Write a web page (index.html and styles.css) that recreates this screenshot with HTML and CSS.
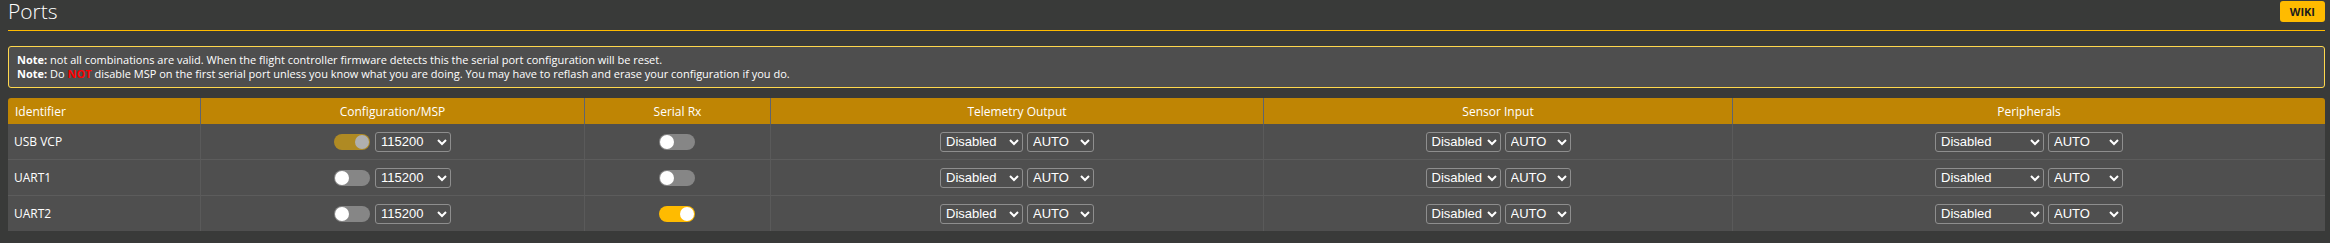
FILE: index.html
```html
<!DOCTYPE html>
<html lang="en">
<head>
    <meta charset="UTF-8">
    <meta name="viewport" content="width=device-width, initial-scale=1.0">
    <title>Ports</title>
    <link rel="stylesheet" href="styles.css">
</head>
<body>
    <div class="tab-ports">
        <div class="tab-header">
            <h1>Ports</h1>
            <a class="wiki-btn" href="#">WIKI</a>
        </div>

        <!-- Warnings -->
        <div class="note">
            <p><strong>Note:</strong> not all combinations are valid. When the flight controller firmware detects this the serial port configuration will be reset.</p>
            <p><strong>Note:</strong> Do <span class="red">NOT</span> disable MSP on the first serial port unless you know what you are doing. You may have to reflash and erase your configuration if you do.</p>
        </div>

        <table class="ports">
            <thead>
                <tr>
                    <th class="col-id">Identifier</th>
                    <th class="col-msp">Configuration/MSP</th>
                    <th class="col-rx">Serial Rx</th>
                    <th class="col-telem">Telemetry Output</th>
                    <th class="col-sensor">Sensor Input</th>
                    <th class="col-periph">Peripherals</th>
                </tr>
            </thead>
            <tbody>
                <tr>
                    <td class="ident">USB VCP</td>
                    <td><div class="cell"><span class="switch on disabled"><span class="knob"></span></span><select class="sel-baud"><option>115200</option></select></div></td>
                    <td><div class="cell"><span class="switch"><span class="knob"></span></span></div></td>
                    <td><div class="cell"><select class="sel-telem"><option>Disabled</option></select><select class="sel-auto-t"><option>AUTO</option></select></div></td>
                    <td><div class="cell"><select class="sel-sensor"><option>Disabled</option></select><select class="sel-auto-s"><option>AUTO</option></select></div></td>
                    <td><div class="cell"><select class="sel-periph"><option>Disabled</option></select><select class="sel-auto-p"><option>AUTO</option></select></div></td>
                </tr>
                <tr>
                    <td class="ident">UART1</td>
                    <td><div class="cell"><span class="switch"><span class="knob"></span></span><select class="sel-baud"><option>115200</option></select></div></td>
                    <td><div class="cell"><span class="switch"><span class="knob"></span></span></div></td>
                    <td><div class="cell"><select class="sel-telem"><option>Disabled</option></select><select class="sel-auto-t"><option>AUTO</option></select></div></td>
                    <td><div class="cell"><select class="sel-sensor"><option>Disabled</option></select><select class="sel-auto-s"><option>AUTO</option></select></div></td>
                    <td><div class="cell"><select class="sel-periph"><option>Disabled</option></select><select class="sel-auto-p"><option>AUTO</option></select></div></td>
                </tr>
                <tr>
                    <td class="ident">UART2</td>
                    <td><div class="cell"><span class="switch"><span class="knob"></span></span><select class="sel-baud"><option>115200</option></select></div></td>
                    <td><div class="cell"><span class="switch on"><span class="knob"></span></span></div></td>
                    <td><div class="cell"><select class="sel-telem"><option>Disabled</option></select><select class="sel-auto-t"><option>AUTO</option></select></div></td>
                    <td><div class="cell"><select class="sel-sensor"><option>Disabled</option></select><select class="sel-auto-s"><option>AUTO</option></select></div></td>
                    <td><div class="cell"><select class="sel-periph"><option>Disabled</option></select><select class="sel-auto-p"><option>AUTO</option></select></div></td>
                </tr>
            </tbody>
        </table>
    </div>
</body>
</html>
```

FILE: styles.css
```css
body {
    margin: 0;
    background: #393a39;
    color: #fff;
    font-family: "Open Sans", "Noto Sans", sans-serif;
}
.tab-ports {
    padding: 0 5px 0 8px;
}
.tab-header {
    display: flex;
    justify-content: space-between;
    align-items: flex-start;
    height: 30px;
    border-bottom: 1px solid #ffbb00;
}
.tab-header h1 {
    margin: 0;
    font-size: 21px;
    font-weight: 300;
    line-height: 22px;
}
.wiki-btn {
    margin-top: 1px;
    padding: 0 10px;
    height: 21px;
    line-height: 21px;
    background: #ffbb00;
    border-radius: 3px;
    color: #1d1d1d;
    font-size: 11px;
    font-weight: 700;
    text-decoration: none;
}
.note {
    margin-top: 15px;
    padding: 6px 8px;
    background: #4e4e4e;
    border: 1px solid #ffd84d;
    border-radius: 3px;
    font-size: 11px;
    line-height: 14px;
}
.note p {
    margin: 0;
}
.note .red {
    color: #ff0000;
    font-weight: 700;
}
.ports {
    margin-top: 10px;
    width: 100%;
    table-layout: fixed;
    border-collapse: separate;
    border-spacing: 0;
    font-size: 12px;
}
.ports th,
.ports td {
    box-sizing: border-box;
}
.ports th {
    height: 26px;
    padding: 0;
    background: #bf8504;
    font-weight: 400;
    text-align: center;
    border-left: 1px solid #5d6470;
}
.ports th:first-child {
    border-left: none;
    border-top-left-radius: 3px;
    text-align: left;
    padding-left: 7px;
}
.ports th:last-child {
    border-top-right-radius: 3px;
}
.col-id { width: 192px; }
.col-msp { width: 384px; }
.col-rx { width: 186px; }
.col-telem { width: 493px; }
.col-sensor { width: 469px; }
.col-periph { width: 593px; }
.ports td {
    height: 36px;
    padding: 0;
    background: #4f4f4f;
    border-top: 1px solid #5c5c5c;
    border-left: 1px solid #5a5a5a;
}
.ports tbody tr:first-child td {
    height: 35px;
    border-top: none;
}
.ports td.ident {
    border-left: none;
    padding-left: 6px;
}
.cell {
    display: flex;
    justify-content: center;
    align-items: center;
    gap: 4px;
}
.switch {
    position: relative;
    display: inline-block;
    width: 36px;
    height: 16px;
    margin-right: 1px;
    border-radius: 8px;
    background: #868686;
}
.switch .knob {
    position: absolute;
    top: 1px;
    left: 1px;
    width: 14px;
    height: 14px;
    border-radius: 50%;
    background: #fff;
}
.switch.on {
    background: #ffbb00;
}
.switch.on .knob {
    left: 21px;
}
.switch.disabled {
    opacity: 0.55;
}
select {
    height: 20px;
    padding: 0 1px;
    border: 1px solid #8e8e8e;
    border-radius: 3px;
    background-color: #4f4f4f;
    color: #fff;
    font-family: "Liberation Sans", Arial, sans-serif;
    font-size: 13px;
}
.sel-baud { width: 76px; }
.sel-telem { width: 83px; }
.sel-auto-t { width: 67px; }
.sel-sensor { width: 75px; }
.sel-auto-s { width: 66px; }
.sel-periph { width: 109px; }
.sel-auto-p { width: 75px; }
```
